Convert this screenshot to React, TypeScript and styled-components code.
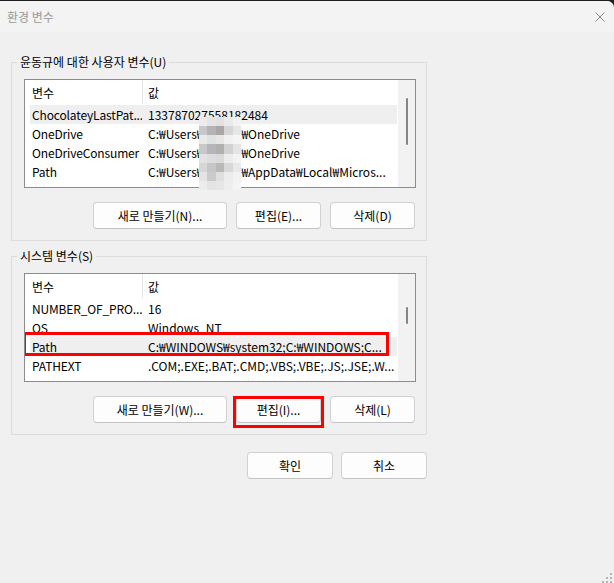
import styled, { createGlobalStyle } from 'styled-components';

const GlobalStyle = createGlobalStyle`
    html, body {
        margin: 0;
        padding: 0;
        background-color: #1e1e1e;
    }
    * {
        box-sizing: border-box;
    }
`;

const uiFont = `"Noto Sans CJK KR", "Liberation Sans", sans-serif`;

type EnvVar = {
    name: string;
    value: string;
    after?: string;
};

const userVars: EnvVar[] = [
    { name: 'ChocolateyLastPat...', value: '133787027558182484' },
    { name: 'OneDrive', value: 'C:₩Users₩', after: '₩OneDrive' },
    { name: 'OneDriveConsumer', value: 'C:₩Users₩', after: '₩OneDrive' },
    { name: 'Path', value: 'C:₩Users₩', after: '₩AppData₩Local₩Micros...' },
];

const systemVars: EnvVar[] = [
    { name: 'NUMBER_OF_PRO...', value: '16' },
    { name: 'OS', value: 'Windows_NT' },
    { name: 'Path', value: 'C:₩WINDOWS₩system32;C:₩WINDOWS;C...' },
    { name: 'PATHEXT', value: '.COM;.EXE;.BAT;.CMD;.VBS;.VBE;.JS;.JSE;.W...' },
];

// pixelated block over the user name in the screenshot
const mosaic = [
    ['#ececec', '#e4e4e4', '#e2e2e2', '#ebebeb', '#f2f2f2'],
    ['#c8c8c8', '#b4b4b8', '#a9a6a4', '#d6d6d6', '#e6e6e6'],
    ['#e9e9ea', '#dfe1e3', '#e6e6e4', '#f1f1f1', '#f5f5f5'],
    ['#c9c8c8', '#b6b6b8', '#b0b0b0', '#d2d2d2', '#e4e4e4'],
    ['#e2e2e3', '#dcdde0', '#dadad8', '#ececec', '#f3f3f3'],
    ['#d6d6d6', '#c6c6c8', '#b8b8b6', '#d8d8d8', '#e8e8e8'],
    ['#e4e4e4', '#c8cacd', '#dedede', '#ececec', '#f2f2f2'],
    ['#ececec', '#e4e4e4', '#e6e6e6', '#eeeeee', '#f4f4f4'],
];

type ListProps = {
    vars: EnvVar[];
    selected: number;
    marked?: number;
    thumbTop: number;
    thumbHeight: number;
    blurred?: boolean;
};

function VarList({ vars, selected, marked, thumbTop, thumbHeight, blurred }: ListProps) {
    return (
        <ListBox>
            <Rows>
                <HeaderRow>
                    <NameCell>변수</NameCell>
                    <HeaderDivider />
                    <ValueCell>값</ValueCell>
                </HeaderRow>
                {vars.map((item, index) => (
                    <Row key={index} $selected={index === selected}>
                        <NameCell>{item.name}</NameCell>
                        <ValueCell>
                            {item.value}
                            {item.after !== undefined && (
                                <>
                                    <NameGap />
                                    {item.after}
                                </>
                            )}
                        </ValueCell>
                        {index === marked && <RowMark />}
                    </Row>
                ))}
            </Rows>
            <ScrollTrack>
                <Thumb style={{ marginTop: thumbTop, height: thumbHeight }} />
            </ScrollTrack>
            {blurred && (
                <Mosaic>
                    {mosaic.flat().map((color, index) => (
                        <MosaicCell key={index} style={{ backgroundColor: color }} />
                    ))}
                </Mosaic>
            )}
        </ListBox>
    );
}

export default function App(): JSX.Element {
    return (
        <>
            <GlobalStyle />
            <Window>
                <TitleBar>
                    <Title>환경 변수</Title>
                    <CloseIcon width="10" height="10" viewBox="0 0 10 10">
                        <path d="M0.5 0.5 L9.5 9.5 M9.5 0.5 L0.5 9.5" stroke="#8c8c8c" strokeWidth="1" fill="none" />
                    </CloseIcon>
                </TitleBar>
                <Body>
                    <Group>
                        <Legend>윤동규에 대한 사용자 변수(U)</Legend>
                        <VarList vars={userVars} selected={0} thumbTop={18} thumbHeight={47} blurred />
                        <ButtonRow>
                            <Button $width={134}>새로 만들기(N)...</Button>
                            <Button $width={85}>편집(E)...</Button>
                            <Button $width={85}>삭제(D)</Button>
                        </ButtonRow>
                    </Group>
                    <Group $spaced>
                        <Legend>시스템 변수(S)</Legend>
                        <VarList vars={systemVars} selected={2} marked={2} thumbTop={33} thumbHeight={17} />
                        <ButtonRow>
                            <Button $width={134}>새로 만들기(W)...</Button>
                            <MarkedWrap>
                                <Button $width={85}>편집(I)...</Button>
                                <ButtonMark />
                            </MarkedWrap>
                            <Button $width={85}>삭제(L)</Button>
                        </ButtonRow>
                    </Group>
                    <DialogButtons>
                        <Button $width={86}>확인</Button>
                        <Button $width={86}>취소</Button>
                    </DialogButtons>
                </Body>
                <Grip width="11" height="11" viewBox="0 0 11 11">
                    <rect x="8" y="0" width="2" height="2" fill="#b4b4b4" />
                    <rect x="4" y="4" width="2" height="2" fill="#b4b4b4" />
                    <rect x="8" y="4" width="2" height="2" fill="#b4b4b4" />
                    <rect x="0" y="8" width="2" height="2" fill="#b4b4b4" />
                    <rect x="4" y="8" width="2" height="2" fill="#b4b4b4" />
                    <rect x="8" y="8" width="2" height="2" fill="#b4b4b4" />
                </Grip>
            </Window>
        </>
    );
}

const Window = styled.div`
    position: relative;
    width: 614px;
    height: 583px;
    margin-top: 1px;
    background-color: #f0f0f0;
    border-top-right-radius: 7px;
    overflow: hidden;
    font-family: ${uiFont};
    font-size: 12px;
    color: #000;
`;

const TitleBar = styled.div`
    height: 31px;
    display: flex;
    justify-content: space-between;
    align-items: center;
    padding: 0 9px 0 7px;
    background-color: #f3f3f3;
`;

const Title = styled.span`
    font-size: 12px;
    color: #9a9a9a;
`;

const CloseIcon = styled.svg`
    display: block;
`;

const Body = styled.div`
    padding: 22px 0 0 11px;
    display: flex;
    flex-direction: column;
    align-items: flex-start;
`;

const Group = styled.fieldset<{ $spaced?: boolean }>`
    margin: ${(p) => (p.$spaced ? '7px' : '0')} 0 0 0;
    width: 416px;
    min-width: 0;
    border: 1px solid #dcdcdc;
    padding: 9px 10px 11px 12px;
`;

const Legend = styled.legend`
    margin-left: -7px;
    padding: 0 3px;
    line-height: 16px;
    font-size: 12px;
    color: #000;
`;

const ListBox = styled.div`
    position: relative;
    width: 392px;
    height: 109px;
    border: 1px solid #8c8c8c;
    background-color: #fff;
    display: flex;
`;

const Rows = styled.div`
    flex: 1;
    min-width: 0;
    overflow: hidden;
    padding: 0 1px 0 5px;
`;

const HeaderRow = styled.div`
    position: relative;
    height: 25px;
    display: flex;
    align-items: center;
`;

const HeaderDivider = styled.div`
    position: absolute;
    left: 112px;
    top: 0;
    width: 1px;
    height: 24px;
    background-color: #e5e5e5;
`;

const Row = styled.div<{ $selected?: boolean }>`
    position: relative;
    height: 19px;
    display: flex;
    align-items: center;
    background-color: ${(p) => (p.$selected ? '#efefef' : 'transparent')};
`;

const NameCell = styled.div`
    width: 112px;
    flex-shrink: 0;
    padding-left: 2px;
    line-height: 18px;
    letter-spacing: -0.15px;
    white-space: nowrap;
    overflow: hidden;
`;

const ValueCell = styled.div`
    flex: 1;
    min-width: 0;
    padding-left: 6px;
    line-height: 18px;
    white-space: nowrap;
    overflow: hidden;
`;

const NameGap = styled.span`
    display: inline-block;
    width: 38px;
`;

const RowMark = styled.div`
    position: absolute;
    top: -5px;
    left: -7px;
    width: 366px;
    height: 24px;
    border: 3px solid #ff0000;
`;

const ScrollTrack = styled.div`
    width: 17px;
    flex-shrink: 0;
    background-color: #f2f2f2;
    display: flex;
    flex-direction: column;
    align-items: center;
`;

const Thumb = styled.div`
    width: 2px;
    border-radius: 1px;
    background-color: #858585;
`;

const Mosaic = styled.div`
    position: absolute;
    top: 37px;
    left: 174px;
    width: 42px;
    height: 73px;
    display: grid;
    grid-template-columns: repeat(5, 1fr);
    grid-template-rows: repeat(8, 1fr);
`;

const MosaicCell = styled.div``;

const ButtonRow = styled.div`
    margin-top: 14px;
    display: flex;
    justify-content: flex-end;
    gap: 9px;
    padding-right: 1px;
`;

const Button = styled.button<{ $width: number }>`
    width: ${(p) => p.$width}px;
    height: 27px;
    padding: 0;
    background-color: #fdfdfd;
    border: 1px solid #d0d0d0;
    border-bottom-color: #c2c2c2;
    border-radius: 4px;
    font-family: ${uiFont};
    font-size: 12px;
    color: #000;
    cursor: pointer;

    &:hover {
        background-color: #f6f6f6;
    }
`;

const MarkedWrap = styled.div`
    position: relative;
    display: flex;
`;

const ButtonMark = styled.div`
    position: absolute;
    top: 0;
    left: -3px;
    right: -3px;
    bottom: -5px;
    border: 3px solid #ff0000;
    pointer-events: none;
`;

const DialogButtons = styled.div`
    width: 416px;
    margin-top: 17px;
    display: flex;
    justify-content: flex-end;
    gap: 8px;
`;

const Grip = styled.svg`
    position: absolute;
    right: 1px;
    bottom: 0px;
`;
